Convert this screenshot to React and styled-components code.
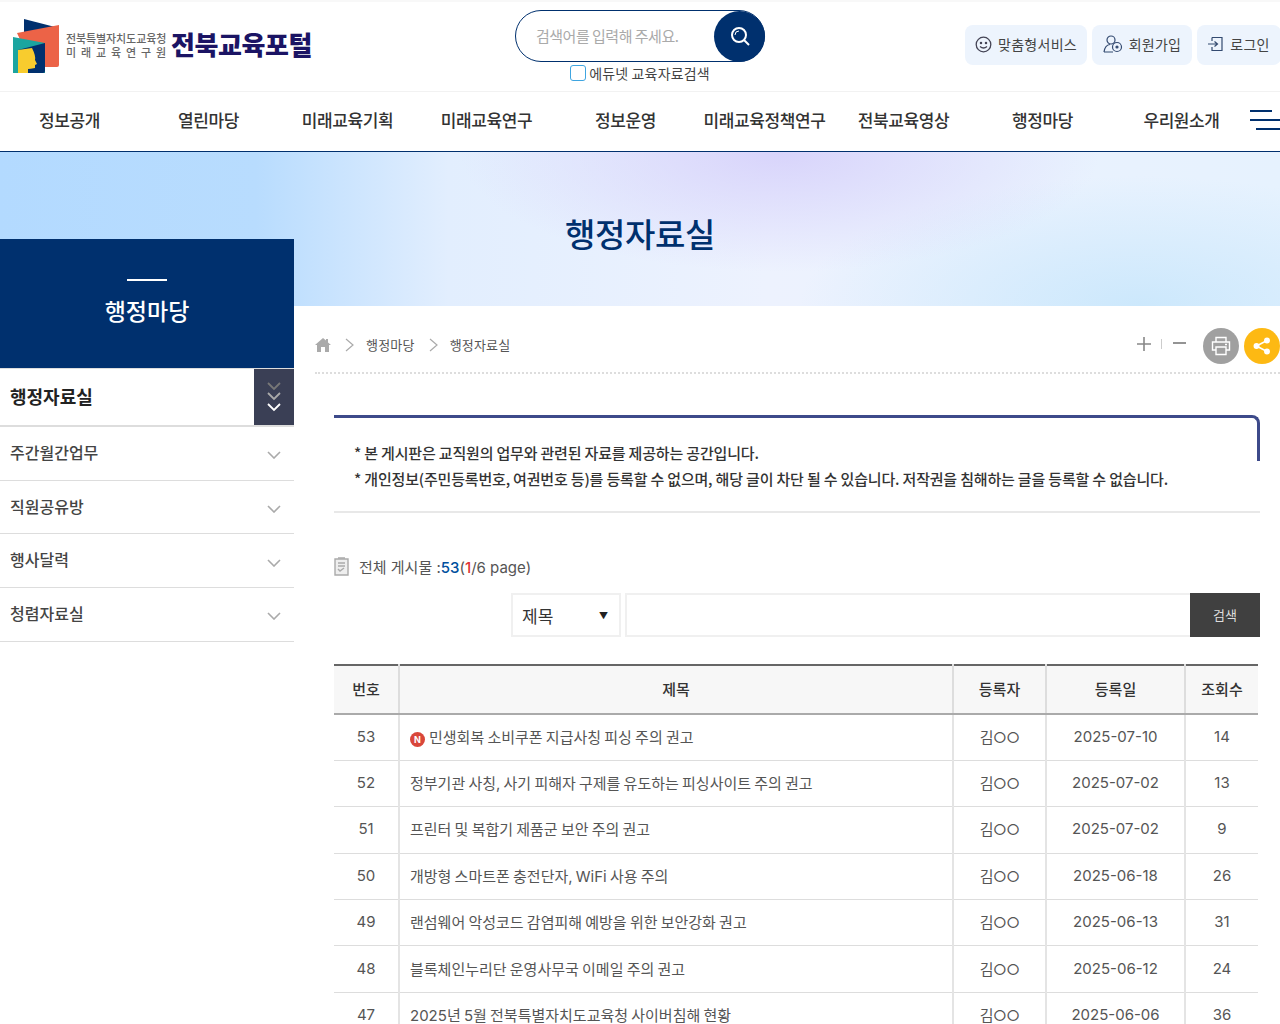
import React from 'react';
import styled, { createGlobalStyle } from 'styled-components';

const Global = createGlobalStyle`
    html, body {
        margin: 0;
        padding: 0;
        background: #fff;
    }
    body {
        font-family: "Noto Sans CJK KR", "Noto Sans", sans-serif;
        color: #333;
    }
    #root {
        width: 1280px;
        height: 1024px;
        overflow: hidden;
    }
    * {
        box-sizing: border-box;
    }
`

const Header = styled.header`
    height: 92px;
    display: flex;
    border-top: 2px solid #f8f8f8;
    border-bottom: 1px solid #f2f2f2;
`

const LogoArea = styled.div`
    width: 515px;
    flex: none;
    padding: 16px 0 0 12px;
    display: flex;
    align-items: flex-start;
`

const LogoLines = styled.div`
    margin: 13px 0 0 4px;
    width: 103px;
    color: #666;
    font-size: 11px;
    font-weight: 500;
    line-height: 14px;
    letter-spacing: -0.1px;
    white-space: nowrap;
`

const LogoSpaced = styled.div`
    letter-spacing: 1.2px;
`

const LogoTitle = styled.div`
    margin: 8px 0 0 2px;
    font-size: 26px;
    line-height: 36px;
    font-weight: 900;
    color: #1b1464;
    letter-spacing: -0.4px;
    white-space: nowrap;
`

const SearchArea = styled.div`
    width: 250px;
    flex: none;
    padding-top: 8px;
`

const SearchPill = styled.div`
    height: 52px;
    border: 1px solid #00306e;
    border-radius: 26px;
    display: flex;
    align-items: center;
    justify-content: space-between;
    padding-left: 20px;
    color: #aaa;
    font-size: 15px;
    letter-spacing: -0.5px;
`

const Placeholder = styled.span`
    margin-top: -2px;
`

const SearchBtn = styled.div`
    width: 51px;
    height: 51px;
    margin-right: -1px;
    border-radius: 50%;
    background: #00306e;
    display: flex;
    align-items: center;
    justify-content: center;
`

const EduCheck = styled.label`
    display: flex;
    align-items: center;
    justify-content: center;
    gap: 3px;
    height: 22px;
    font-size: 14px;
    color: #444;
    letter-spacing: 0.15px;
`

const CheckBox = styled.span`
    width: 16px;
    height: 16px;
    border: 1px solid #3fa5e0;
    border-radius: 3px;
    background: #fff;
`

const Utils = styled.div`
    flex: 1;
    display: flex;
    gap: 5px;
    padding: 23px 0 0 200px;
    white-space: nowrap;
`

const UtilBtn = styled.div`
    height: 40px;
    width: ${(p) => p.$w}px;
    flex: none;
    display: flex;
    align-items: center;
    justify-content: center;
    gap: 6px;
    padding-bottom: 2px;
    background: #edf4fd;
    border-radius: 8px;
    font-size: 14px;
    letter-spacing: 0.25px;
    color: #444;
`

const Nav = styled.nav`
    height: 60px;
    display: flex;
    align-items: center;
    padding-bottom: 4px;
    border-bottom: 1px solid #00306e;
`

const NavItem = styled.div`
    width: 139px;
    flex: none;
    text-align: center;
    font-size: 17px;
    font-weight: 500;
    color: #333;
    letter-spacing: -0.4px;
    white-space: nowrap;
`

const Burger = styled.div`
    flex: none;
    width: 31px;
    margin-left: -1px;
    display: flex;
    flex-direction: column;
    gap: 7px;
`

const BurgerBar = styled.span`
    display: block;
    height: 2px;
    width: ${(p) => p.$w}px;
    margin-left: ${(p) => p.$ml || 0}px;
    background: #00306e;
`

const Hero = styled.div`
    height: 154px;
    background:
        radial-gradient(ellipse 320px 120px at 780px 0, #d8d4fb, transparent),
        radial-gradient(ellipse 340px 130px at 1140px 154px, #cce8fc, transparent),
        linear-gradient(90deg, #b3daff 0, #b8dcfe 20%, #e2eefe 35%, #edf2fe 60%, #e6f2fe 100%);
    display: flex;
    justify-content: center;
    padding-top: 56px;
    font-size: 33px;
    line-height: 50px;
    font-weight: 500;
    letter-spacing: -0.4px;
    color: #00306e;
`

const Content = styled.div`
    display: flex;
    align-items: flex-start;
`

const Side = styled.aside`
    width: 294px;
    flex: none;
    margin-top: -67px;
    position: relative;
`

const SideTop = styled.div`
    height: 129px;
    background: #00306e;
    color: #fff;
    display: flex;
    flex-direction: column;
    align-items: center;
    padding-top: 40px;
    font-size: 23px;
    line-height: 34px;
    font-weight: 500;
`

const SideDash = styled.span`
    width: 40px;
    height: 2px;
    background: #fff;
    margin-bottom: 12px;
`

const SideActive = styled.div`
    height: 59px;
    display: flex;
    align-items: center;
    justify-content: space-between;
    padding-left: 10px;
    font-size: 18px;
    font-weight: 700;
    color: #222;
    border-top: 1px solid #ddd;
    border-bottom: 2px solid #ddd;
`

const SideLabel = styled.span`
    margin-top: -2px;
`

const ToggleBox = styled.div`
    width: 40px;
    height: 56px;
    background: #3a3f55;
    display: flex;
    align-items: center;
    justify-content: center;
`

const SideItem = styled.div`
    height: 53.7px;
    display: flex;
    align-items: center;
    justify-content: space-between;
    padding: 0 13px 0 10px;
    font-size: 16px;
    font-weight: 500;
    color: #444;
    border-bottom: 1px solid #ddd;
`

const ItemLabel = styled.span`
    margin-top: -3px;
`

const ChevronWrap = styled.span`
    display: flex;
    margin-top: 4px;
`

const Main = styled.main`
    flex: 1;
    min-width: 0;
    padding-left: 21px;
`

const Crumbs = styled.div`
    height: 68px;
    display: flex;
    align-items: center;
    border-bottom: 2px dotted #ddd;
    font-size: 13px;
    letter-spacing: 0.2px;
    color: #555;
    padding-top: 10px;
`

const HomeIcon = styled.svg`
    margin-top: 1px;
`

const CrumbArrow = styled.span`
    display: flex;
    margin: 1px 12px 0 14px;
`

const Tools = styled.div`
    margin-left: auto;
    display: flex;
    align-items: center;
`

const ZoomSep = styled.span`
    width: 1px;
    height: 10px;
    background: #ccc;
    margin: 0 11px 0 10px;
`

const RoundBtn = styled.div`
    width: 36px;
    height: 36px;
    margin-top: 4px;
    border-radius: 50%;
    background: ${(p) => p.$bg};
    margin-left: ${(p) => p.$ml}px;
    display: flex;
    align-items: center;
    justify-content: center;
`

const Board = styled.div`
    padding: 41px 20px 0 19px;
`

const Notice = styled.div`
    height: 98px;
    padding: 25px 20px 0 20px;
    position: relative;
    border-bottom: 2px solid #e8e8e8;
    font-size: 15px;
    line-height: 25.6px;
    font-weight: 500;
    color: #333;
    letter-spacing: -0.18px;
    white-space: nowrap;
    &::before {
        content: "";
        position: absolute;
        left: 0;
        right: 0;
        top: 0;
        height: 43px;
        border-top: 3px solid #3d4a8a;
        border-right: 3px solid #3d4a8a;
        border-top-right-radius: 8px;
    }
`

const Count = styled.div`
    margin-top: 41px;
    height: 24px;
    display: flex;
    align-items: center;
    gap: 10px;
    font-family: "Inter", "Noto Sans CJK KR", sans-serif;
    font-size: 15px;
    color: #555;
`

const Num = styled.b`
    font-weight: 500;
    color: ${(p) => p.$c};
`

const SearchRow = styled.div`
    margin-top: 15px;
    display: flex;
    justify-content: flex-end;
    height: 44px;
    gap: 4px;
`

const SelectBox = styled.div`
    width: 110px;
    border: 2px solid #f0f0f0;
    display: flex;
    align-items: center;
    justify-content: space-between;
    padding: 0 11px 0 9px;
    font-size: 17px;
    color: #333;
`

const Caret = styled.span`
    font-size: 9px;
    color: #222;
`

const TextBox = styled.div`
    width: 565px;
    border: 2px solid #f0f0f0;
    border-right: 0;
`

const GoBtn = styled.div`
    width: 70px;
    margin-left: -4px;
    padding-bottom: 2px;
    background: #404040;
    color: #ddd;
    font-size: 13px;
    display: flex;
    align-items: center;
    justify-content: center;
`

const Table = styled.table`
    margin-top: 27px;
    width: 924px;
    border-collapse: collapse;
    table-layout: fixed;
    border-top: 2px solid #666;
`

const Th = styled.th`
    height: 49px;
    padding: 0 0 3px;
    background: #f7f7f7;
    font-size: 15px;
    font-weight: 500;
    color: #333;
    border-bottom: 2px solid #aaa;
    border-left: 2px solid #ddd;
    &:first-child {
        border-left: 0;
    }
`

const Td = styled.td`
    height: 46.4px;
    padding: 0 0 2px;
    text-align: ${(p) => (p.$left ? 'left' : 'center')};
    padding-left: ${(p) => (p.$left ? '10px' : '0')};
    font-family: "Inter", "Noto Sans CJK KR", sans-serif;
    font-size: 15px;
    word-spacing: -1px;
    color: #555;
    border-bottom: 1px solid #ddd;
    border-left: 2px solid #e4e4e4;
    white-space: nowrap;
    &:first-child {
        border-left: 0;
    }
`

const Writer = styled.span`
    letter-spacing: -0.5px;
`

const NewBadge = styled.span`
    display: inline-flex;
    width: 15px;
    height: 15px;
    border-radius: 50%;
    background: #d9473a;
    color: #fff;
    font-size: 9px;
    font-weight: 700;
    align-items: center;
    justify-content: center;
    margin-right: 4px;
`

const menu = ['정보공개', '열린마당', '미래교육기획', '미래교육연구', '정보운영', '미래교육정책연구', '전북교육영상', '행정마당', '우리원소개'];
const sideMenu = ['주간월간업무', '직원공유방', '행사달력', '청렴자료실'];
const rows = [
    [53, '민생회복 소비쿠폰 지급사칭 피싱 주의 권고', '2025-07-10', 14, true],
    [52, '정부기관 사칭, 사기 피해자 구제를 유도하는 피싱사이트 주의 권고', '2025-07-02', 13],
    [51, '프린터 및 복합기 제품군 보안 주의 권고', '2025-07-02', 9],
    [50, '개방형 스마트폰 충전단자, WiFi 사용 주의', '2025-06-18', 26],
    [49, '랜섬웨어 악성코드 감염피해 예방을 위한 보안강화 권고', '2025-06-13', 31],
    [48, '블록체인누리단 운영사무국 이메일 주의 권고', '2025-06-12', 24],
    [47, '2025년 5월 전북특별자치도교육청 사이버침해 현황', '2025-06-06', 36],
];

const Logo = () => (
    <svg width="50" height="56" viewBox="0 0 50 56">
        <path d="M12 1 L47 10 L12 19 Z" fill="#00306e" />
        <path d="M5 15 L47 7 V47 Q47 49 45 49 H12 V30 Z" fill="#ec6347" />
        <path d="M1 19 L33 25 V55 H1 Z" fill="#1ba5a0" />
        <path d="M6 32 L33 25 V53 Q33 55 31 55 H6 Z" fill="#00306e" />
        <path d="M6 32 L20 30 Q24 38 23 42 L25 46 L23 47 L23 50 Q18 51 16 51 V55 H6 Z" fill="#f8cc2e" />
    </svg>
);

const Chevron = ({ color = '#aaa' }) => (
    <svg width="14" height="8" viewBox="0 0 14 8" fill="none" stroke={color} strokeWidth="1.6">
        <path d="M1 1 L7 7 L13 1" />
    </svg>
);

const Arrow = () => (
    <CrumbArrow>
        <svg width="9" height="14" viewBox="0 0 9 14" fill="none" stroke="#aaa" strokeWidth="1.2"><path d="M1 1 L8 7 L1 13" /></svg>
    </CrumbArrow>
);

const App = () => (
    <>
        <Global />
        <Header>
            <LogoArea>
                <Logo />
                <LogoLines>
                    <div>전북특별자치도교육청</div>
                    <LogoSpaced>미 래 교 육 연 구 원</LogoSpaced>
                </LogoLines>
                <LogoTitle>전북교육포털</LogoTitle>
            </LogoArea>
            <SearchArea>
                <SearchPill>
                    <Placeholder>검색어를 입력해 주세요.</Placeholder>
                    <SearchBtn>
                        <svg width="22" height="22" viewBox="0 0 22 22" fill="none" stroke="#fff" strokeWidth="2">
                            <circle cx="10" cy="10" r="7" />
                            <path d="M15 15 L20 20" />
                            <path d="M6 10 a4 4 0 0 1 4 -4" strokeWidth="1" />
                        </svg>
                    </SearchBtn>
                </SearchPill>
                <EduCheck>
                    <CheckBox />
                    에듀넷 교육자료검색
                </EduCheck>
            </SearchArea>
            <Utils>
                <UtilBtn $w={122}>
                    <svg width="17" height="17" viewBox="0 0 17 17" fill="none" stroke="#445" strokeWidth="1.3">
                        <circle cx="8.5" cy="8.5" r="7.3" />
                        <circle cx="6" cy="7" r="0.6" />
                        <circle cx="11" cy="7" r="0.6" />
                        <path d="M5 10.5 Q8.5 13.5 12 10.5" />
                    </svg>
                    맞춤형서비스
                </UtilBtn>
                <UtilBtn $w={100}>
                    <svg width="20" height="18" viewBox="0 0 20 18" fill="none" stroke="#334a70" strokeWidth="1.2">
                        <circle cx="8" cy="5" r="4" />
                        <path d="M1 17 Q2 10 7 9.5 M1 17 H10" />
                        <circle cx="14" cy="12" r="4.5" />
                        <circle cx="14" cy="12" r="1" fill="#334a70" />
                    </svg>
                    회원가입
                </UtilBtn>
                <UtilBtn $w={84}>
                    <svg width="16" height="16" viewBox="0 0 16 16" fill="none" stroke="#334a70" strokeWidth="1.2">
                        <path d="M4 1.5 H14 V14.5 H4 V11 M4 5 V1.5" />
                        <path d="M0 8 H9 M6.5 5.5 L9.5 8 L6.5 10.5" />
                    </svg>
                    로그인
                </UtilBtn>
            </Utils>
        </Header>
        <Nav>
            {menu.map((m) => <NavItem key={m}>{m}</NavItem>)}
            <Burger>
                <BurgerBar $w={22} />
                <BurgerBar $w={31} />
                <BurgerBar $w={25} $ml={6} />
            </Burger>
        </Nav>
        <Hero>행정자료실</Hero>
        <Content>
            <Side>
                <SideTop>
                    <SideDash />
                    행정마당
                </SideTop>
                <SideActive>
                    <SideLabel>행정자료실</SideLabel>
                    <ToggleBox>
                        <svg width="14" height="32" viewBox="0 0 14 32" fill="none" strokeWidth="1.8">
                            <path d="M1 2 L7 8 L13 2" stroke="#777" />
                            <path d="M1 12 L7 18 L13 12" stroke="#aaa" />
                            <path d="M1 23 L7 29 L13 23" stroke="#fff" />
                        </svg>
                    </ToggleBox>
                </SideActive>
                {sideMenu.map((s) => (
                    <SideItem key={s}>
                        <ItemLabel>{s}</ItemLabel>
                        <ChevronWrap><Chevron /></ChevronWrap>
                    </SideItem>
                ))}
            </Side>
            <Main>
                <Crumbs>
                    <HomeIcon width="16" height="14" viewBox="0 0 16 14" fill="#aaa">
                        <path d="M8 0 L11 2.6 V1 H13 V4.4 L16 7 H14 V14 H10 V9 H6 V14 H2 V7 H0 Z" />
                    </HomeIcon>
                    <Arrow />
                    행정마당
                    <Arrow />
                    행정자료실
                    <Tools>
                        <svg width="14" height="14" viewBox="0 0 14 14" stroke="#888" strokeWidth="1.6"><path d="M0 7 H14 M7 0 V14" /></svg>
                        <ZoomSep />
                        <svg width="13" height="14" viewBox="0 0 13 14" stroke="#888" strokeWidth="1.8"><path d="M0 6 H13" /></svg>
                        <RoundBtn $bg="#a0a0a0" $ml={17}>
                            <svg width="20" height="20" viewBox="0 0 20 20" fill="none" stroke="#fff" strokeWidth="1.4">
                                <path d="M5 6 V1.5 H15 V6" />
                                <path d="M5 14 H1.5 V6 H18.5 V14 H15" />
                                <path d="M5 11 H15 V18.5 H5 Z" />
                                <path d="M14 8.5 H16" />
                            </svg>
                        </RoundBtn>
                        <RoundBtn $bg="#fdb913" $ml={5}>
                            <svg width="18" height="18" viewBox="0 0 18 18" fill="#fff" stroke="#fff" strokeWidth="1.5">
                                <circle cx="3.5" cy="9" r="2.2" />
                                <circle cx="14" cy="3.5" r="2.2" />
                                <circle cx="14" cy="14.5" r="2.2" />
                                <path d="M3.5 9 L14 3.5 M3.5 9 L14 14.5" />
                            </svg>
                        </RoundBtn>
                    </Tools>
                </Crumbs>
                <Board>
                    <Notice>
                        <div>* 본 게시판은 교직원의 업무와 관련된 자료를 제공하는 공간입니다.</div>
                        <div>* 개인정보(주민등록번호, 여권번호 등)를 등록할 수 없으며, 해당 글이 차단 될 수 있습니다. 저작권을 침해하는 글을 등록할 수 없습니다.</div>
                    </Notice>
                    <Count>
                        <svg width="15" height="19" viewBox="0 0 15 19" fill="none" stroke="#aaa" strokeWidth="1.4">
                            <path d="M1 2 H14 V18 H1 Z" fill="#eee" />
                            <path d="M4 1 H11 M4 6 H11 M4 9 H11 M4 12 L6 14 L10 11" />
                        </svg>
                        <span>전체 게시물 :<Num $c="#00509e">53</Num>(<Num $c="#d33">1</Num>/6 page)</span>
                    </Count>
                    <SearchRow>
                        <SelectBox>제목<Caret>▼</Caret></SelectBox>
                        <TextBox />
                        <GoBtn>검색</GoBtn>
                    </SearchRow>
                    <Table>
                        <colgroup>
                            <col width="65" />
                            <col width="554" />
                            <col width="93" />
                            <col width="139" />
                            <col width="73" />
                        </colgroup>
                        <thead>
                            <tr>
                                <Th>번호</Th>
                                <Th>제목</Th>
                                <Th>등록자</Th>
                                <Th>등록일</Th>
                                <Th>조회수</Th>
                            </tr>
                        </thead>
                        <tbody>
                            {rows.map(([no, title, date, hit, isNew]) => (
                                <tr key={no}>
                                    <Td>{no}</Td>
                                    <Td $left>{isNew && <NewBadge>N</NewBadge>}{title}</Td>
                                    <Td><Writer>김○○</Writer></Td>
                                    <Td>{date}</Td>
                                    <Td>{hit}</Td>
                                </tr>
                            ))}
                        </tbody>
                    </Table>
                </Board>
            </Main>
        </Content>
    </>
);

export default App
